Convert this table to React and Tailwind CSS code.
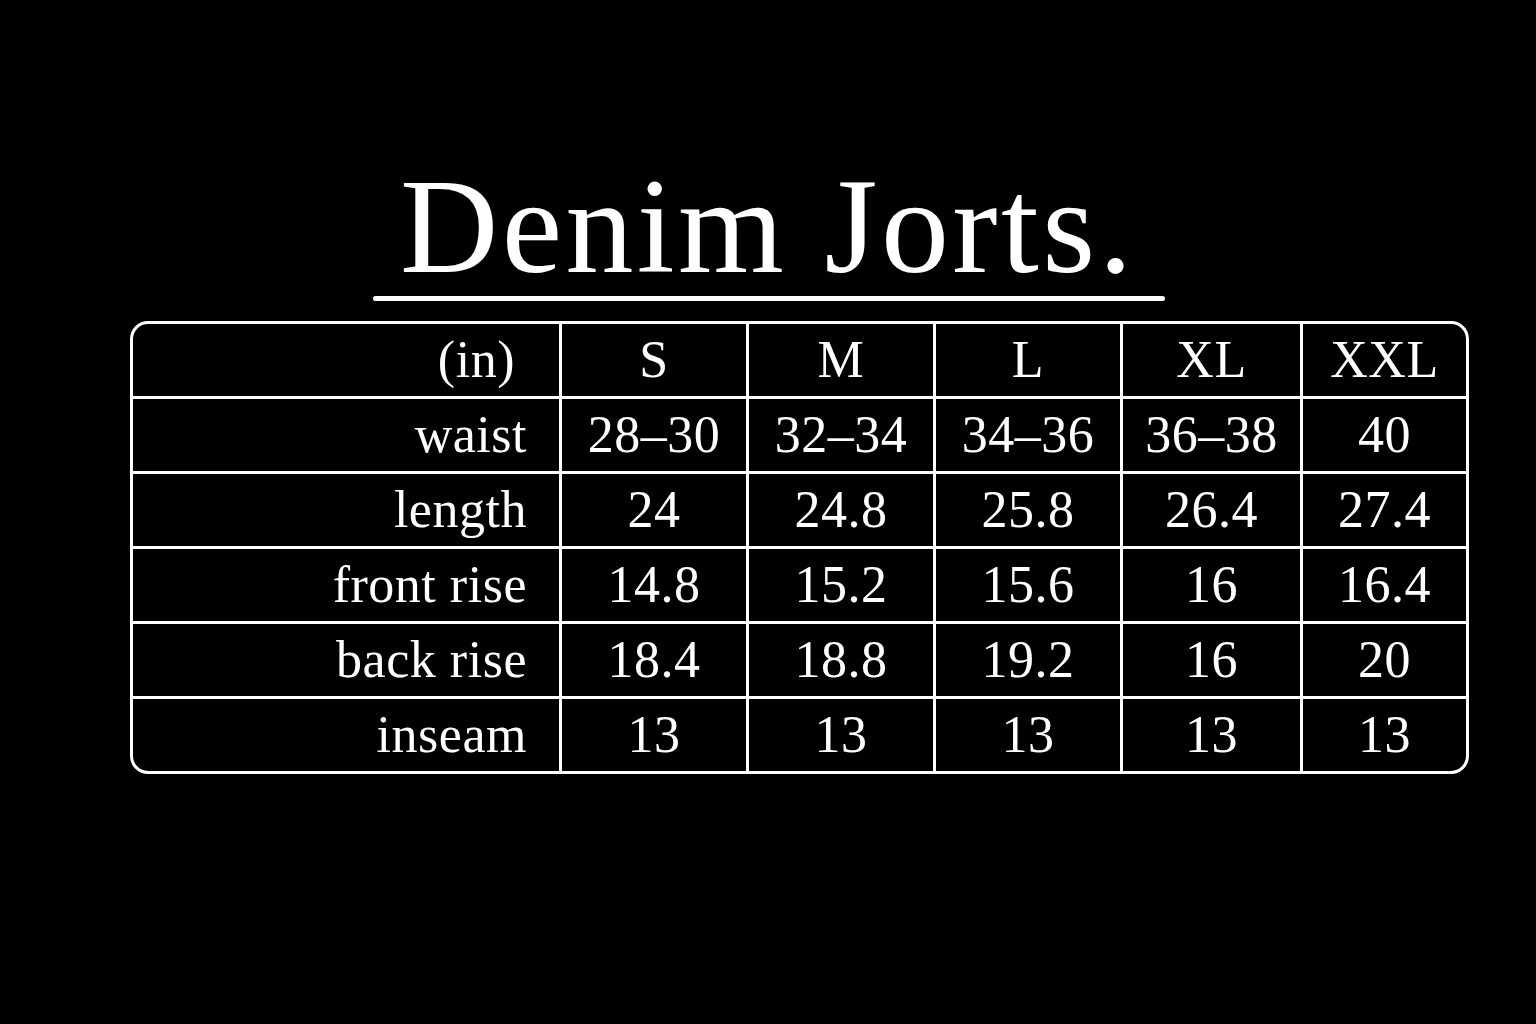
const sizes = ["S", "M", "L", "XL", "XXL"];

const rows = [
  { label: "waist", values: ["28–30", "32–34", "34–36", "36–38", "40"] },
  { label: "length", values: ["24", "24.8", "25.8", "26.4", "27.4"] },
  { label: "front rise", values: ["14.8", "15.2", "15.6", "16", "16.4"] },
  { label: "back rise", values: ["18.4", "18.8", "19.2", "16", "20"] },
  { label: "inseam", values: ["13", "13", "13", "13", "13"] },
];

const serif = { fontFamily: '"Liberation Serif", "Times New Roman", serif' };

export default function App() {
  return (
    <div className="min-h-[1024px] w-[1536px] bg-black text-white" style={serif}>
      <div className="pt-[158px]">
        {/* Title */}
        <h1 className="text-center text-[136px] leading-none tracking-[0.025em] font-normal">
          Denim Jorts.
        </h1>
        <div className="mx-auto mt-[2px] h-[5px] w-[792px] translate-x-[1px] rounded-full bg-white" />

        {/* Size chart */}
        <div className="mt-[20px] ml-[130px] w-[1339px] overflow-hidden rounded-[18px] border-[3px] border-white">
          <div className="grid grid-cols-[426px_187px_187px_187px_180px_1fr] text-[52px] leading-none tracking-[0.01em]">
            <div className="flex h-[72px] items-center justify-end pr-[44px]">(in)</div>
            {sizes.map((s) => (
              <div key={s} className="flex h-[72px] items-center justify-center border-l-[3px] border-white">
                {s}
              </div>
            ))}

            {rows.map((row) => (
              <div key={row.label} className="contents">
                <div className="flex h-[75px] items-center justify-end border-t-[3px] border-white pr-[32px]">
                  {row.label}
                </div>
                {row.values.map((v, i) => (
                  <div
                    key={i}
                    className="flex h-[75px] items-center justify-center border-l-[3px] border-t-[3px] border-white"
                  >
                    {v}
                  </div>
                ))}
              </div>
            ))}
          </div>
        </div>
      </div>
    </div>
  );
}
